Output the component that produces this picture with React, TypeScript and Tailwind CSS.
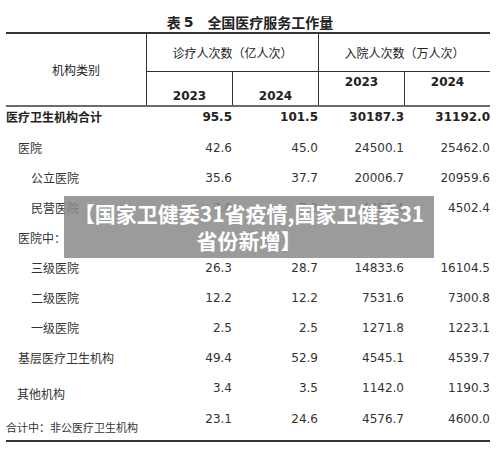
import React from "react";

const cjk = "font-['Noto_Sans_CJK_SC',sans-serif]";
const num = "font-['DejaVu_Sans',sans-serif]";

type Row = {
  label: string;
  indent: string;
  vals: string[];
  labelShift?: string;
  labelSize?: string;
  h: string;
};

const rows: Row[] = [
  { label: "医院", indent: "pl-[12px]", vals: ["42.6", "45.0", "24500.1", "25462.0"], h: "h-[30px]" },
  { label: "公立医院", indent: "pl-[25px]", vals: ["35.6", "37.7", "20006.7", "20959.6"], h: "h-[30px]" },
  { label: "民营医院", indent: "pl-[25px]", vals: ["7.0", "7.3", "4493.4", "4502.4"], h: "h-[30px]" },
  { label: "医院中：", indent: "pl-[12px]", vals: ["", "", "", ""], h: "h-[30px]" },
  { label: "三级医院", indent: "pl-[25px]", vals: ["26.3", "28.7", "14833.6", "16104.5"], h: "h-[30px]" },
  { label: "二级医院", indent: "pl-[25px]", vals: ["12.2", "12.2", "7531.6", "7300.8"], h: "h-[30px]" },
  { label: "一级医院", indent: "pl-[25px]", vals: ["2.5", "2.5", "1271.8", "1223.1"], h: "h-[30px]" },
  { label: "基层医疗卫生机构", indent: "pl-[12px]", vals: ["49.4", "52.9", "4545.1", "4539.7"], h: "h-[30px]" },
  { label: "其他机构", indent: "pl-[11px]", vals: ["3.4", "3.5", "1142.0", "1190.3"], labelShift: "mt-[12px]", h: "h-[30px]" },
  { label: "合计中：非公医疗卫生机构", indent: "pl-[0px]", vals: ["23.1", "24.6", "4576.7", "4600.0"], labelShift: "mt-[16px]", labelSize: "text-[11px]", h: "h-[28px]" },
];

const cols = "grid grid-cols-[141px_86px_86px_86px_85px]";

export default function App() {
  return (
    <div className="relative w-[500px] h-[455px] bg-white text-[#222] overflow-hidden">
      <div className="pt-[12px]">
        <div className={`h-[20px] flex items-center justify-center text-[14px] leading-[20px] font-semibold ${cjk} text-[#222]`}>
          <span>表</span>
          <span className={`${num} font-bold ml-[3px] mr-[14px]`}>5</span>
          <span>全国医疗服务工作量</span>
        </div>
        <div className="mx-[6px] w-[484px]">
          {/* header */}
          <div className={`${cols} grid-rows-[38px_33px] border-t-[2px] border-[#333] border-b-[2px] border-b-[#6b6b6b]`}>
            <div className={`row-span-2 flex items-center justify-center text-[12px] ${cjk} border-r border-[#333]`}>
              机构类别
            </div>
            <div className={`col-span-2 flex items-center justify-center text-[12px] ${cjk} border-r border-b border-[#333]`}>
              诊疗人次数（亿人次）
            </div>
            <div className={`col-span-2 flex items-center justify-center text-[12px] ${cjk} border-b border-[#333]`}>
              入院人次数（万人次）
            </div>
            <div className={`flex items-end justify-center pb-[1px] text-[12px] leading-[16px] font-bold ${num} border-r border-[#333]`}>2023</div>
            <div className={`flex items-end justify-center pb-[1px] text-[12px] leading-[16px] font-bold ${num} border-r border-[#333]`}>2024</div>
            <div className={`flex items-start justify-center pt-[2px] text-[12px] leading-[16px] font-bold ${num} border-r border-[#333]`}>2023</div>
            <div className={`flex items-start justify-center pt-[2px] text-[12px] leading-[16px] font-bold ${num}`}>2024</div>
          </div>
          {/* total row */}
          <div className={`${cols} items-center h-[19px] mb-[7px]`}>
            <div className={`text-[12px] font-bold ${cjk}`}>医疗卫生机构合计</div>
            <div className={`text-right pr-[1px] text-[12px] font-bold ${num}`}>95.5</div>
            <div className={`text-right pr-[1px] text-[12px] font-bold ${num}`}>101.5</div>
            <div className={`text-right pr-[1px] text-[12px] font-bold ${num}`}>30187.3</div>
            <div className={`text-right text-[12px] font-bold ${num}`}>31192.0</div>
          </div>
          {rows.map((r) => (
            <div key={r.label} className={`${cols} items-center ${r.h}`}>
              <div className={`${r.indent} ${r.labelShift ?? ""} ${r.labelSize ?? "text-[12px]"} whitespace-nowrap ${cjk} text-[#333]`}>{r.label}</div>
              {r.vals.map((v, i) => (
                <div key={i} className={`text-right ${i < 3 ? "pr-[1px]" : ""} text-[12px] ${num} text-[#333]`}>
                  {v}
                </div>
              ))}
            </div>
          ))}
          <div className="mt-[9px] border-t-[2px] border-[#333]" />
        </div>
      </div>
      <div className={`absolute left-[64px] top-[196px] w-[370px] h-[62px] bg-[#8a8a8a]/85 flex items-center justify-center text-center text-white font-bold text-[21px] leading-[27px] ${cjk}`}>
        <div>
          【国家卫健委31省疫情,国家卫健委31
          <br />
          省份新增】
        </div>
      </div>
    </div>
  );
}
